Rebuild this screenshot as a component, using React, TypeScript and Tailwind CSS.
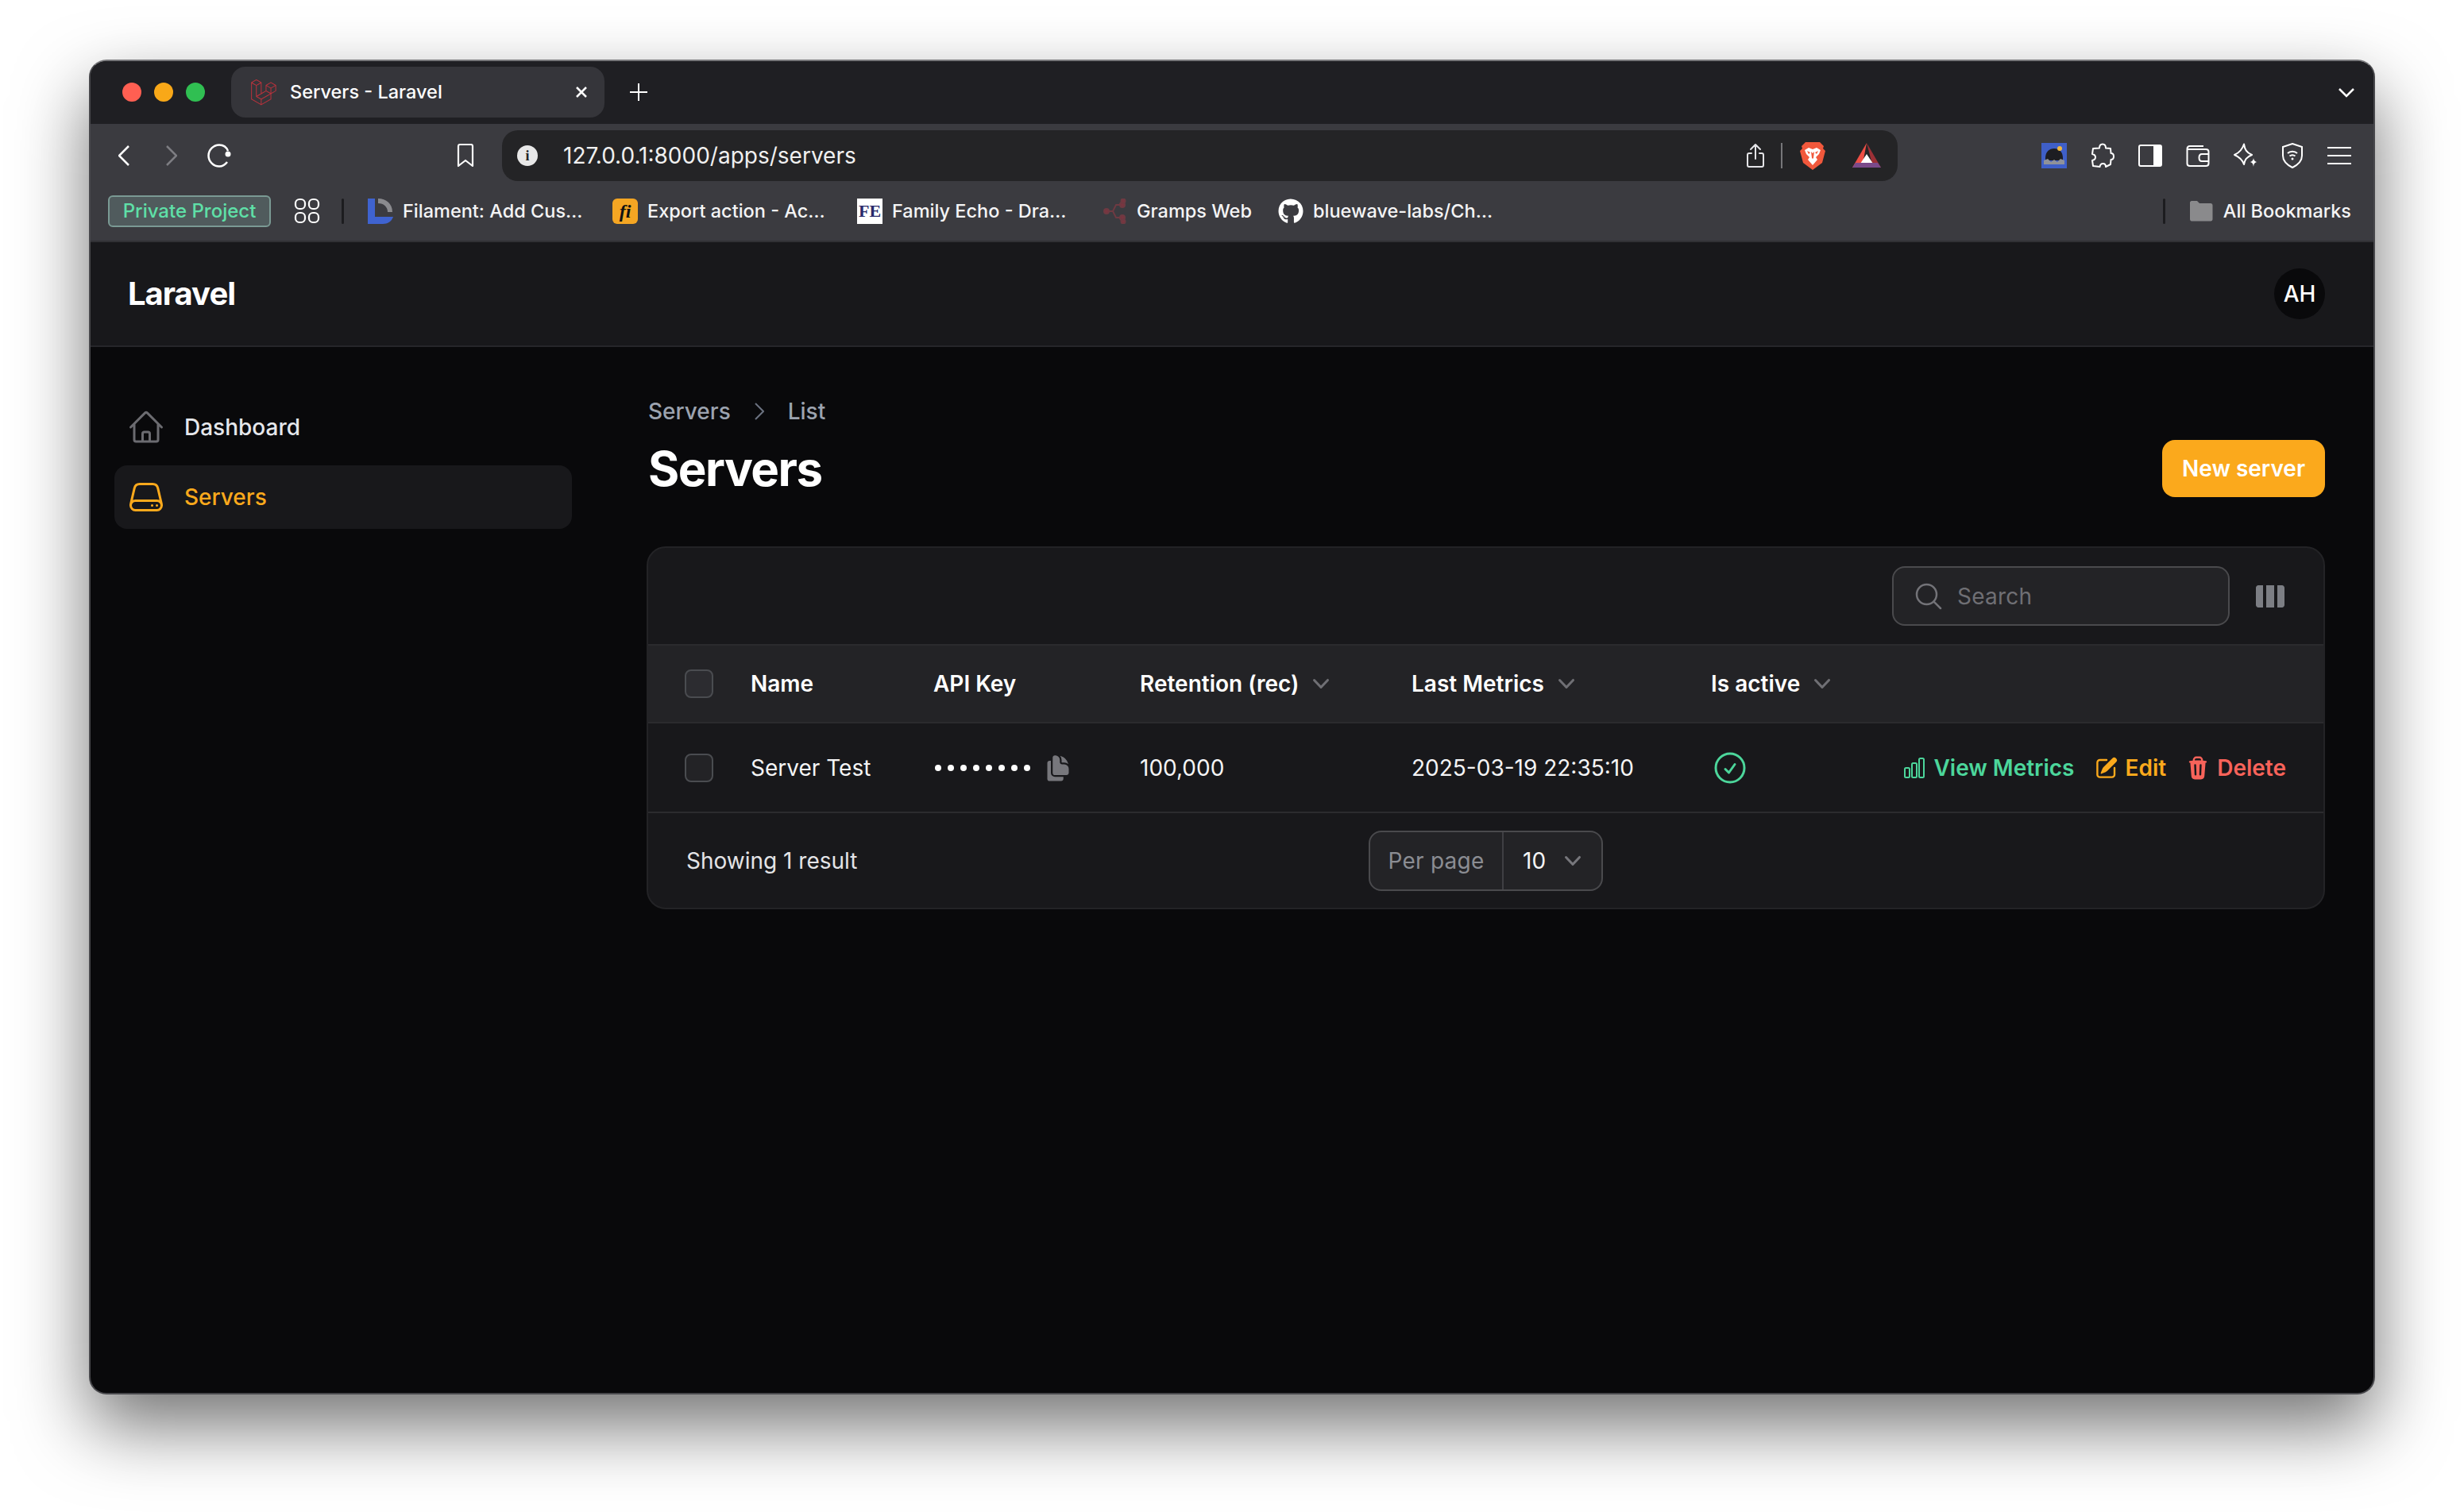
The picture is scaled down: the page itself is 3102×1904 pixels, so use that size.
import { FaGithub } from "react-icons/fa"

const ROW = "grid grid-cols-[83px_230px_260px_342px_377px_1fr] items-center pl-[46px] pr-[47px]"

function Hero({ d, className, sw = 1.5 }: { d: string; className: string; sw?: number }) {
    return (
        <svg viewBox="0 0 24 24" fill="none" stroke="currentColor" strokeWidth={sw} strokeLinecap="round" strokeLinejoin="round" className={className}>
            <path d={d} />
        </svg>
    )
}

function Chevron({ className }: { className: string }) {
    return (
        <svg viewBox="0 0 20 20" fill="currentColor" className={className}>
            <path fillRule="evenodd" clipRule="evenodd" d="M5.23 7.21a.75.75 0 011.06.02L10 11.168l3.71-3.938a.75.75 0 111.08 1.04l-4.25 4.5a.75.75 0 01-1.08 0l-4.25-4.5a.75.75 0 01.02-1.06z" />
        </svg>
    )
}

function LaravelLogo() {
    return (
        <svg viewBox="0 0 50 52" fill="#b8323c" className="w-[32px] h-[33px] shrink-0">
            <path d="M49.626 11.564a.809.809 0 0 1 .028.209v10.972a.8.8 0 0 1-.402.694l-9.209 5.302V39.25c0 .286-.152.55-.4.694L20.42 51.01c-.044.025-.092.041-.14.058-.018.006-.035.017-.054.022a.805.805 0 0 1-.41 0c-.022-.006-.042-.018-.063-.026-.044-.016-.09-.03-.132-.054L.402 39.944A.801.801 0 0 1 0 39.25V6.334c0-.072.01-.142.028-.21.006-.023.02-.044.028-.067.015-.042.029-.085.051-.124.015-.026.037-.047.055-.071.023-.032.044-.065.071-.093.023-.023.053-.04.079-.06.029-.024.055-.05.088-.069h.001l9.61-5.533a.802.802 0 0 1 .8 0l9.61 5.533h.002c.032.02.059.045.088.068.026.02.055.038.078.06.028.029.048.062.072.094.017.024.04.045.054.071.023.04.036.082.052.124.008.023.022.044.028.068a.809.809 0 0 1 .028.209v20.559l8.008-4.611v-10.51c0-.07.01-.141.028-.208.007-.024.02-.045.028-.068.016-.042.03-.085.052-.124.015-.026.037-.047.054-.071.024-.032.044-.065.072-.093.023-.023.052-.04.078-.06.03-.024.056-.05.088-.069h.001l9.611-5.533a.801.801 0 0 1 .8 0l9.61 5.533c.034.02.06.045.09.068.025.02.054.038.077.06.028.029.048.062.072.094.018.024.04.045.054.071.023.039.036.082.052.124.009.023.022.044.028.068zm-1.574 10.718v-9.124l-3.363 1.936-4.646 2.675v9.124l8.01-4.611zm-9.61 16.505v-9.13l-4.57 2.61-13.05 7.448v9.216l17.62-10.144zM1.602 7.719v31.068L19.22 48.93v-9.214l-9.204-5.209-.003-.002-.004-.002c-.031-.018-.057-.044-.086-.066-.025-.02-.054-.036-.076-.058l-.002-.003c-.026-.025-.044-.056-.066-.084-.02-.027-.044-.05-.06-.078l-.001-.003c-.018-.03-.029-.066-.042-.1-.013-.03-.03-.058-.038-.09v-.001c-.01-.038-.012-.078-.016-.117-.004-.03-.012-.06-.012-.09v-.002-21.481L4.965 9.654 1.602 7.72zm8.81-5.994L2.405 6.334l8.005 4.609 8.006-4.61-8.006-4.608zm4.164 28.764l4.645-2.674V7.719l-3.363 1.936-4.646 2.675v20.096l3.364-1.937zM39.243 7.164l-8.006 4.609 8.006 4.609 8.005-4.61-8.005-4.608zm-.801 10.605l-4.646-2.675-3.363-1.936v9.124l4.645 2.674 3.364 1.937v-9.124zM20.02 38.33l11.743-6.704 5.87-3.35-8-4.606-9.211 5.303-8.395 4.833 7.993 4.524z" />
        </svg>
    )
}

function Brave() {
    return (
        <svg viewBox="0 0 32 36" className="w-[32px] h-[36px] shrink-0">
            <path fill="#f1583c" d="M7 1H25L30 6 29 9 32 12 28 27 20 33 16 36 12 33 4 27 0 12 3 9 2 6Z" />
            <path fill="#ffffff" d="M6 11 11 8 16 10 21 8 26 11 24 16 20 20 22 23 16 30 10 23 12 20 8 16Z" />
            <path fill="#f1583c" d="M14 13 15 21 16 22 17 21 18 13 16 15ZM9 12 13 14 11 16ZM23 12 19 14 21 16Z" />
        </svg>
    )
}

function Triangle() {
    return (
        <svg viewBox="0 0 36 32" className="w-[36px] h-[32px] shrink-0">
            <path fill="#9c3036" d="M18 0 36 31H26Z" />
            <path fill="#ef4f45" d="M18 0 0 31H12Z" />
            <path fill="#ffffff" d="M18 14 26 26H10Z" />
            <path fill="#7a4a8a" d="M0 31 4 25H32L36 31Z" />
        </svg>
    )
}

function TopIcons() {
    return (
        <div className="flex items-center ml-[181px] gap-[30px] text-white">
            {/* extension with a picture */}
            <svg viewBox="0 0 32 32" className="w-[32px] h-[32px]">
                <rect width="32" height="32" fill="#3f5fc8" />
                <path fill="#1d1d22" d="M5 19C5 11 10 7 16 7s11 4 11 12v3H5Z" />
                <path fill="#8f9299" d="M3 22 8 20 12 24 16 21 20 24 24 20 29 22V27H3Z" />
                <circle cx="23" cy="7" r="3" fill="#f0b840" />
            </svg>
            {/* extensions puzzle */}
            <svg viewBox="0 0 30 32" fill="none" stroke="currentColor" strokeWidth="2" strokeLinejoin="round" className="w-[30px] h-[32px]">
                <path d="M11 6.5C11 3 13 1.5 15 1.5S19 3 19 6.5L25 7 25.5 13C28 13 29 15 29 17S28 21 25.5 21L25 27 19 30C19 27 17.5 26 15.5 26S12 27 11.5 30L3 29 2 22C4.5 21.5 6 20 6 18S4.5 14.5 2 14L3 7Z" />
            </svg>
            {/* sidebar */}
            <svg viewBox="0 0 30 30" className="w-[30px] h-[30px]">
                <rect x="1" y="2" width="28" height="26" rx="2" fill="none" stroke="currentColor" strokeWidth="2" />
                <rect x="19" y="2" width="10" height="26" fill="currentColor" />
            </svg>
            {/* wallet */}
            <svg viewBox="0 0 30 30" fill="none" stroke="currentColor" strokeWidth="2" className="w-[30px] h-[30px]">
                <path d="M22 3H5C3 3 1.5 4.5 1.5 6.5V25C1.5 27 3 28 5 28H25C27 28 28.5 27 28.5 25V10C28.5 8 27 7 25 7H1.5" />
                <path d="M28.5 13H20C18 13 16.5 14.500 16.500 17.500S18 22 20 22H28.500" />
            </svg>
            {/* leo sparkle */}
            <svg viewBox="0 0 30 32" fill="none" stroke="currentColor" strokeWidth="2" strokeLinejoin="round" className="w-[30px] h-[32px]">
                <path d="M13 1.500C14 8 16 12 23 15 16 18 14 21 13 27 11 21 8 18 1 15 8 12 11 8 13 1.500Z" />
                <path fill="currentColor" stroke="none" d="M25 19C25.500 22 26.500 23 29 24 26.500 25 25.500 26 25 30 24.500 26 23.500 25 21 24 23.500 23 24.500 22 25 19Z" />
            </svg>
            {/* vpn shield */}
            <svg viewBox="0 0 28 32" fill="none" stroke="currentColor" strokeWidth="2" className="w-[28px] h-[32px]">
                <path d="M14 1 26 5V16C26 23 20 28 14 31 8 28 2 23 2 16V5Z" />
                <path d="M8 13C11 10 17 10 20 13M10.500 16.500C12.500 15 15.500 15 17.500 16.500" />
                <circle cx="14" cy="20" r="1.500" fill="currentColor" stroke="none" />
            </svg>
            {/* hamburger */}
            <svg viewBox="0 0 30 24" fill="none" stroke="currentColor" strokeWidth="2" className="w-[30px] h-[24px]">
                <path d="M0 2H30M0 12H30M0 22H30" />
            </svg>
        </div>
    )
}

function Bookmark({ icon, label, className }: { icon: React.ReactNode; label: string; className: string }) {
    return (
        <div className={`flex items-center gap-[12px] shrink-0 ${className}`}>
            {icon}
            <span className="text-[23.5px] font-medium leading-[32px] text-[#f4f4f5] whitespace-nowrap">{label}</span>
        </div>
    )
}

function BrowserChrome() {
    return (
        <div className="shrink-0">
            {/* tab strip */}
            <div className="h-[79px] bg-[#1f1f23] flex items-start pt-[7px]">
                <div className="flex items-center gap-[16px] h-[64px] ml-[40px]">
                    <span className="w-[24px] h-[24px] rounded-full bg-[#ff5f52]" />
                    <span className="w-[24px] h-[24px] rounded-full bg-[#f9a818]" />
                    <span className="w-[24px] h-[24px] rounded-full bg-[#30bf52]" />
                </div>
                <div className="ml-[33px] w-[470px] h-[64px] rounded-[18px] bg-[#35353a] flex items-center pl-[25px] pr-[21px]">
                    <LaravelLogo />
                    <span className="ml-[17px] text-[23.5px] font-medium text-white whitespace-nowrap">Servers - Laravel</span>
                    <svg viewBox="0 0 16 16" fill="none" stroke="#ffffff" strokeWidth="2.500" className="w-[16px] h-[16px] ml-auto">
                        <path d="M2 2 14 14M14 2 2 14" />
                    </svg>
                </div>
                <svg viewBox="0 0 22 22" fill="none" stroke="#ffffff" strokeWidth="2" className="w-[22px] h-[22px] ml-[32px] mt-[21px]">
                    <path d="M11 0V22M0 11H22" />
                </svg>
                <svg viewBox="0 0 20 12" fill="none" stroke="#ffffff" strokeWidth="2.5" className="w-[20px] h-[12px] ml-auto mr-[24px] mt-[27px]">
                    <path d="M1 1 10 10 19 1" />
                </svg>
            </div>

            {/* toolbar */}
            <div className="h-[80px] bg-[#3b3b40] flex items-center text-white">
                <svg viewBox="0 0 14 26" fill="none" stroke="currentColor" strokeWidth="2.500" className="w-[14px] h-[26px] ml-[35px]">
                    <path d="M13 1 1 13 13 25" />
                </svg>
                <svg viewBox="0 0 14 26" fill="none" stroke="#7d7d82" strokeWidth="2.500" className="w-[14px] h-[26px] ml-[46px]">
                    <path d="M1 1 13 13 1 25" />
                </svg>
                <svg viewBox="0 0 30 30" fill="none" stroke="currentColor" strokeWidth="2.500" className="w-[30px] h-[30px] ml-[38px]">
                    <path d="M25 23C22 27 18 28.500 15 28.500 8 28.500 1.500 22.500 1.500 15S8 1.500 15 1.500C20 1.500 24 4 26 9" />
                    <circle cx="26" cy="13" r="3.500" fill="currentColor" stroke="none" />
                </svg>
                <svg viewBox="0 0 22 30" fill="none" stroke="currentColor" strokeWidth="2.200" strokeLinejoin="round" className="w-[22px] h-[30px] ml-[284px]">
                    <path d="M2 3C2 2 3 1 4 1H18C19 1 20 2 20 3V28L11 21 2 28Z" />
                </svg>
                <div className="ml-[35px] w-[1757px] h-[64px] rounded-[20px] bg-[#242426] flex items-center shrink-0">
                    <span className="ml-[19px] w-[26px] h-[26px] rounded-full bg-[#e8e8e8] flex items-center justify-center text-[#242426] text-[18px] font-bold font-['Liberation_Serif',serif]">i</span>
                    <span className="ml-[32px] text-[28px] text-[#f0f0f0] whitespace-nowrap">127.0.0.1:8000/apps/servers</span>
                    <svg viewBox="0 0 24 32" fill="none" stroke="#e4e4e7" strokeWidth="2" strokeLinecap="round" strokeLinejoin="round" className="w-[24px] h-[32px] ml-auto">
                        <path d="M12 20V2M6 8 12 2 18 8M7 13H4C3 13 2 14 2 15V28C2 29 3 30 4 30H20C21 30 22 29 22 28V15C22 14 21 13 20 13H17" />
                    </svg>
                    <span className="ml-[20px] w-[2px] h-[32px] bg-[#77777a]" />
                    <span className="ml-[22px] flex"><Brave /></span>
                    <span className="ml-[34px] mr-[21px] flex"><Triangle /></span>
                </div>
                <TopIcons />
            </div>

            {/* bookmarks bar */}
            <div className="h-[69px] bg-[#3b3b40] border-b-2 border-[#313135] flex items-center pb-[8px] relative">
                <div className="ml-[22px] w-[205px] h-[40px] rounded-[6px] border-2 border-[#7a9a94] bg-[#505b5d] flex items-center justify-center shrink-0">
                    <span className="text-[24px] font-medium text-[#5fe0a8] leading-none whitespace-nowrap">Private Project</span>
                </div>
                <svg viewBox="0 0 33 33" fill="none" stroke="#ffffff" strokeWidth="2.200" className="w-[33px] h-[33px] ml-[29px] shrink-0">
                    <rect x="2" y="2" width="12" height="12" rx="5" />
                    <rect x="19" y="2" width="12" height="12" rx="5" />
                    <rect x="2" y="19" width="12" height="12" rx="5" />
                    <rect x="19" y="19" width="12" height="12" rx="5" />
                </svg>
                <span className="w-[3px] h-[32px] ml-[27px] bg-[#1c1c1f] shrink-0 rounded-full" />
                <Bookmark
                    className="ml-[30px] w-[308px]"
                    label="Filament: Add Cus…"
                    icon={
                        <svg viewBox="0 0 32 32" className="w-[32px] h-[32px] shrink-0">
                            <path fill="#3f63d0" d="M0 0H9V23H32C30 29 25 32 19 32H0Z" />
                            <path fill="none" stroke="#8a8a8e" strokeWidth="6" d="M13 3C22 3 28 9 28 17" />
                        </svg>
                    }
                />
                <Bookmark
                    className="w-[308px]"
                    label="Export action - Ac…"
                    icon={
                        <span className="w-[32px] h-[32px] rounded-[6px] bg-[#f5a623] flex items-center justify-center shrink-0 text-[#111111] text-[24px] leading-none font-bold italic font-['Liberation_Serif',serif]">fi</span>
                    }
                />
                <Bookmark
                    className="w-[310px]"
                    label="Family Echo - Dra…"
                    icon={
                        <span className="w-[32px] h-[32px] bg-white flex items-center justify-center shrink-0 text-[#2a2a6a] text-[22px] leading-none font-bold font-['Liberation_Serif',serif]">FE</span>
                    }
                />
                <Bookmark
                    className="w-[220px]"
                    label="Gramps Web"
                    icon={
                        <svg viewBox="0 0 30 32" fill="none" stroke="#6e3a42" strokeWidth="2" className="w-[30px] h-[32px] shrink-0">
                            <path d="M4 16H12L16 8H24M12 16 16 24H24M20 8 24 3M20 24 24 29" />
                            <circle cx="4" cy="16" r="3" fill="#7a3540" />
                            <circle cx="24" cy="8" r="3" fill="#7a3540" />
                            <circle cx="24" cy="24" r="3" fill="#7a3540" />
                            <circle cx="25" cy="3" r="2.500" fill="#7a3540" />
                            <circle cx="25" cy="29" r="2.500" fill="#7a3540" />
                        </svg>
                    }
                />
                <Bookmark
                    className="w-[300px]"
                    label="bluewave-labs/Ch…"
                    icon={<FaGithub className="w-[32px] h-[32px] shrink-0 text-white" />}
                />
                <div className="ml-auto mr-[28px] flex items-center shrink-0">
                    <span className="w-[3px] h-[32px] bg-[#1c1c1f] rounded-full mr-[30px]" />
                    <svg viewBox="0 0 30 27" className="w-[30px] h-[27px] mr-[13px]">
                        <path fill="#8a8a8c" d="M1 3C1 2 2 1 3 1H10L13 4H27C28.500 4 29.500 5 29.500 6.500V24C29.500 25.500 28.500 26.500 27 26.500H3C2 26.500 1 25.500 1 24Z" />
                    </svg>
                    <span className="text-[23.5px] font-medium text-[#f4f4f5] whitespace-nowrap">All Bookmarks</span>
                </div>
            </div>
        </div>
    )
}

function Sidebar() {
    return (
        <aside className="w-[622px] shrink-0 pl-[30px] pr-[16px] pt-[61px] flex flex-col gap-[8px]">
            <div className="h-[80px] rounded-[16px] flex items-center pl-[16px] gap-[24px]">
                <Hero
                    className="w-[48px] h-[48px] text-[#6b6b70]"
                    d="M2.25 12l8.954-8.955c.44-.439 1.152-.439 1.591 0L21.750 12M4.500 9.750v10.125c0 .621.504 1.125 1.125 1.125H9.750v-4.875c0-.621.504-1.125 1.125-1.125h2.250c.621 0 1.125.504 1.125 1.125V21h4.125c.621 0 1.125-.504 1.125-1.125V9.750M8.250 21h8.250"
                />
                <span className="text-[28px] font-medium text-[#e5e7eb]">Dashboard</span>
            </div>
            <div className="h-[80px] rounded-[16px] bg-[#18181b] flex items-center pl-[16px] gap-[24px]">
                <Hero
                    className="w-[48px] h-[48px] text-[#fba91c]"
                    d="M21.750 17.250v-.228a4.500 4.500 0 00-.12-1.030l-2.268-9.640a3.375 3.375 0 00-3.285-2.602H7.923a3.375 3.375 0 00-3.285 2.602l-2.268 9.640a4.500 4.500 0 00-.12 1.030v.228m19.500 0a3 3 0 01-3 3H5.250a3 3 0 01-3-3m19.500 0a3 3 0 00-3-3H5.250a3 3 0 00-3 3m16.500 0h.008v.008h-.008v-.008zm-3 0h.008v.008h-.008v-.008z"
                />
                <span className="text-[28px] font-medium text-[#fba91c]">Servers</span>
            </div>
        </aside>
    )
}

function HeaderCell({ label, sort }: { label: string; sort?: boolean }) {
    return (
        <div className="flex items-center gap-[8px]">
            <span className="text-[28px] font-semibold text-white whitespace-nowrap">{label}</span>
            {sort && <Chevron className="w-[40px] h-[40px] text-[#6f6f74]" />}
        </div>
    )
}

function Checkbox({ className }: { className: string }) {
    return <span className={`block w-[36px] h-[36px] rounded-[8px] border-2 border-[#4a4c50] ${className}`} />
}

function ServersCard() {
    return (
        <div className="mt-[62px] rounded-[24px] bg-[#18181b] border-2 border-[#232326] overflow-hidden">
            {/* search */}
            <div className="h-[121px] flex items-center justify-end pr-[49px] gap-[33px]">
                <div className="w-[425px] h-[75px] rounded-[16px] bg-[#232326] border-2 border-[#4a4a4d] flex items-center pl-[28px] gap-[16px]">
                    <Hero
                        className="w-[40px] h-[40px] text-[#737378] -ml-[4px]"
                        d="M21 21l-5.197-5.197m0 0A7.500 7.500 0 105.196 5.196a7.500 7.500 0 0010.607 10.607z"
                    />
                    <span className="text-[28px] text-[#6f6f74] tracking-[0.25px]">Search</span>
                </div>
                <svg viewBox="0 0 36 28" fill="#7c7e84" className="w-[36px] h-[28px]">
                    <path d="M3 0H9V28H3C1.500 28 0 26.500 0 25V3C0 1.500 1.500 0 3 0ZM13 0H23V28H13ZM27 0H33C34.500 0 36 1.500 36 3V25C36 26.500 34.500 28 33 28H27Z" />
                </svg>
            </div>

            {/* head */}
            <div className={`${ROW} h-[100px] bg-[#232326] border-y-2 border-[#2b2b2e]`}>
                <Checkbox className="bg-[#2c2c30]" />
                <HeaderCell label="Name" />
                <HeaderCell label="API Key" />
                <HeaderCell label="Retention (rec)" sort />
                <HeaderCell label="Last Metrics" sort />
                <HeaderCell label="Is active" sort />
            </div>

            {/* row */}
            <div className={`${ROW} h-[113px] border-b-2 border-[#2b2b2e]`}>
                <Checkbox className="bg-[#232326]" />
                <span className="text-[28px] text-[#f4f4f5]">Server Test</span>
                <div className="flex items-center pl-[2px]">
                    <span className="flex gap-[8px] w-[137px]">
                        {[0, 1, 2, 3, 4, 5, 6, 7].map(i => (
                            <span key={i} className="w-[8px] h-[8px] rounded-full bg-white" />
                        ))}
                    </span>
                    <svg viewBox="0 0 24 24" fill="#77777c" className="w-[36px] h-[36px]">
                        <path d="M7.500 3.375c0-1.036.84-1.875 1.875-1.875h.375a3.750 3.750 0 013.750 3.750v1.875C13.500 8.161 14.340 9 15.375 9h1.875A3.750 3.750 0 0121 12.750v3.375C21 17.160 20.160 18 19.125 18h-9.750A1.875 1.875 0 017.500 16.125V3.375z" />
                        <path d="M15 5.250a5.230 5.230 0 00-1.279-3.434 9.768 9.768 0 016.963 6.963A5.230 5.230 0 0017.250 7.500h-1.875A.375.375 0 0115 7.125V5.250zM4.875 6H6v10.125A3.375 3.375 0 009.375 19.500H16.500v1.625c0 1.035-.84 1.875-1.875 1.875h-9.750A1.875 1.875 0 013 21.125V7.875C3 6.839 3.840 6 4.875 6z" />
                    </svg>
                </div>
                <span className="text-[28px] text-[#f4f4f5]">100,000</span>
                <span className="text-[28px] text-[#f4f4f5]">2025-03-19 22:35:10</span>
                <div className="flex items-center">
                    <Hero className="w-[48px] h-[48px] text-[#4cd69b]" d="M9 12.750L11.250 15 15 9.750M21 12a9 9 0 11-18 0 9 9 0 0118 0z" />
                    <div className="ml-auto flex items-center gap-[24px]">
                        <div className="flex items-center gap-[8px] text-[#4cd69b]">
                            <Hero
                                className="w-[32px] h-[32px]"
                                d="M3 13.125C3 12.504 3.504 12 4.125 12h2.250c.621 0 1.125.504 1.125 1.125v6.750C7.500 20.496 6.996 21 6.375 21h-2.250A1.125 1.125 0 013 19.875v-6.750zM9.750 8.625c0-.621.504-1.125 1.125-1.125h2.250c.621 0 1.125.504 1.125 1.125v11.250c0 .621-.504 1.125-1.125 1.125h-2.250a1.125 1.125 0 01-1.125-1.125V8.625zM16.500 4.125c0-.621.504-1.125 1.125-1.125h2.250C20.496 3 21 3.504 21 4.125v15.750c0 .621-.504 1.125-1.125 1.125h-2.250a1.125 1.125 0 01-1.125-1.125V4.125z"
                            />
                            <span className="text-[28px] font-semibold whitespace-nowrap">View Metrics</span>
                        </div>
                        <div className="flex items-center gap-[8px] text-[#fba91c]">
                            <svg viewBox="0 0 20 20" fill="currentColor" className="w-[32px] h-[32px]">
                                <path d="M5.433 13.917l1.262-3.155A4 4 0 017.580 9.420l6.920-6.918a2.121 2.121 0 013 3l-6.920 6.918c-.383.383-.84.685-1.343.886l-3.154 1.262a.500.500 0 01-.650-.650z" />
                                <path d="M3.500 5.750c0-.690.560-1.250 1.250-1.250H10A.750.750 0 0010 3H4.750A2.750 2.750 0 002 5.750v9.500A2.750 2.750 0 004.750 18h9.500A2.750 2.750 0 0017 15.250V10a.750.750 0 00-1.500 0v5.250c0 .690-.560 1.250-1.250 1.250h-9.500c-.690 0-1.250-.560-1.250-1.250v-9.500z" />
                            </svg>
                            <span className="text-[28px] font-semibold">Edit</span>
                        </div>
                        <div className="flex items-center gap-[8px] text-[#f8635a]">
                            <svg viewBox="0 0 20 20" fill="currentColor" className="w-[32px] h-[32px]">
                                <path fillRule="evenodd" clipRule="evenodd" d="M8.750 1A2.750 2.750 0 006 3.750v.443c-.795.077-1.584.176-2.365.298a.750.750 0 10.230 1.482l.149-.022.841 10.518A2.750 2.750 0 007.596 19h4.807a2.750 2.750 0 002.742-2.530l.841-10.520.149.023a.750.750 0 00.230-1.482A41.030 41.030 0 0014 4.193V3.750A2.750 2.750 0 0011.250 1h-2.500zM10 4c.84 0 1.673.025 2.500.075V3.750c0-.690-.560-1.250-1.250-1.250h-2.500c-.690 0-1.250.560-1.250 1.250v.325C8.327 4.025 9.160 4 10 4zM8.580 7.720a.750.750 0 00-1.500.060l.3 7.500a.750.750 0 101.500-.060l-.3-7.500zm4.340.060a.750.750 0 10-1.500-.060l-.3 7.500a.750.750 0 101.500.060l.3-7.500z" />
                            </svg>
                            <span className="text-[28px] font-semibold">Delete</span>
                        </div>
                    </div>
                </div>
            </div>

            {/* footer */}
            <div className="h-[119px] flex items-center pl-[48px] relative">
                <span className="text-[28px] text-[#e4e4e7] w-[861px]">Showing 1 result</span>
                <div className="w-[295px] h-[76px] rounded-[16px] bg-[#232326] border-2 border-[#4a4a4d] flex items-center -ml-[2px]">
                    <span className="w-[168px] h-full flex items-center justify-center border-r-2 border-[#3f3f43] text-[28px] text-[#8b8d93] tracking-[0.25px]">Per page</span>
                    <span className="ml-[24px] text-[28px] text-[#f4f4f5]">10</span>
                    <Chevron className="w-[40px] h-[40px] text-[#77777c] ml-[14px]" />
                </div>
            </div>
        </div>
    )
}

export default function App() {
    return (
        <div className="w-[3102px] h-[1904px] bg-white pl-[112px] pt-[75px] overflow-hidden font-['Inter',sans-serif] antialiased">
            <div className="w-[2878px] h-[1681px] rounded-[22px] border-2 border-[#48484c] border-t-[#77777a] bg-[#09090b] overflow-hidden flex flex-col shadow-[0_40px_90px_rgba(0,0,0,0.55)]">
                <BrowserChrome />

                <header className="h-[132px] shrink-0 bg-[#18181b] border-b-2 border-[#26262a] flex items-center justify-between pl-[47px] pr-[61px]">
                    <span className="text-[40px] font-bold tracking-[-1px] text-white">Laravel</span>
                    <span className="w-[64px] h-[64px] rounded-full bg-[#09090b] flex items-center justify-center text-[28px] font-medium text-white">AH</span>
                </header>

                <div className="flex flex-1 min-h-0">
                    <Sidebar />
                    <main className="flex-1 pl-[78px] pr-[61px] pt-[61px]">
                        <div className="flex items-end justify-between pl-[2px]">
                            <div>
                                <div className="flex items-center h-[40px] text-[28px] text-[#9ca3af] font-medium">
                                    <span>Servers</span>
                                    <svg viewBox="0 0 12 22" fill="none" stroke="#6b7280" strokeWidth="2" className="w-[12px] h-[22px] mx-[30px]">
                                        <path d="M1 1 11 11 1 21" />
                                    </svg>
                                    <span>List</span>
                                </div>
                                <h1 className="mt-[16px] text-[60px] leading-[72px] font-bold tracking-[-1.500px] text-white">Servers</h1>
                            </div>
                            <div className="w-[205px] h-[72px] rounded-[16px] bg-[#fba91c] flex items-center justify-center text-[28px] font-semibold text-white">New server</div>
                        </div>
                        <ServersCard />
                    </main>
                </div>
            </div>
        </div>
    )
}
